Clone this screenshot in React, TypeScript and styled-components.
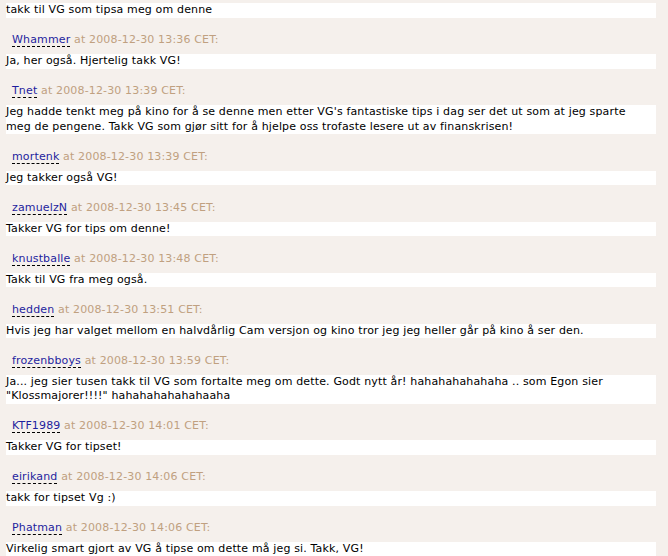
import React from "react";
import styled, { createGlobalStyle } from "styled-components";

const Global = createGlobalStyle`
  html, body { margin: 0; padding: 0; background: #f5f0ec; }
  body { font-family: "DejaVu Sans", Verdana, sans-serif; font-size: 11px; color: #000; letter-spacing: 0.15px; }
`;

const List = styled.div`
  width: 650px;
  padding: 3px 0 0 6px;
`;

const Comment = styled.div`
  display: flex;
  flex-direction: column;
`;

const Byline = styled.div`
  margin: 15.5px 0 7px 6px;
  line-height: 14px;
  color: #c0a080;
`;

const Author = styled.span`
  color: #1e1e9e;
  border-bottom: 1px dashed #000;
`;

const Body = styled.div`
  background: #ffffff;
  line-height: 14.5px;
  padding-right: 8px;
`;

type C = { author?: string; time?: string; text: React.ReactNode };

const comments: C[] = [
  { text: "takk til VG som tipsa meg om denne" },
  { author: "Whammer", time: "2008-12-30 13:36", text: "Ja, her også. Hjertelig takk VG!" },
  {
    author: "Tnet",
    time: "2008-12-30 13:39",
    text: "Jeg hadde tenkt meg på kino for å se denne men etter VG's fantastiske tips i dag ser det ut som at jeg sparte meg de pengene. Takk VG som gjør sitt for å hjelpe oss trofaste lesere ut av finanskrisen!",
  },
  { author: "mortenk", time: "2008-12-30 13:39", text: "Jeg takker også VG!" },
  { author: "zamuelzN", time: "2008-12-30 13:45", text: "Takker VG for tips om denne!" },
  { author: "knustballe", time: "2008-12-30 13:48", text: "Takk til VG fra meg også." },
  {
    author: "hedden",
    time: "2008-12-30 13:51",
    text: "Hvis jeg har valget mellom en halvdårlig Cam versjon og kino tror jeg jeg heller går på kino å ser den.",
  },
  {
    author: "frozenbboys",
    time: "2008-12-30 13:59",
    text: "Ja... jeg sier tusen takk til VG som fortalte meg om dette. Godt nytt år! hahahahahahaha .. som Egon sier \"Klossmajorer!!!!\" hahahahahahahaaha",
  },
  { author: "KTF1989", time: "2008-12-30 14:01", text: "Takker VG for tipset!" },
  { author: "eirikand", time: "2008-12-30 14:06", text: "takk for tipset Vg :)" },
  { author: "Phatman", time: "2008-12-30 14:06", text: "Virkelig smart gjort av VG å tipse om dette må jeg si. Takk, VG!" },
];

export default function App() {
  return (
    <>
      <Global />
      <List>
        {comments.map((c, i) => (
          <Comment key={i}>
            {c.author && (
              <Byline>
                <Author>{c.author}</Author> at {c.time} CET:
              </Byline>
            )}
            <Body>{c.text}</Body>
          </Comment>
        ))}
      </List>
    </>
  );
}
